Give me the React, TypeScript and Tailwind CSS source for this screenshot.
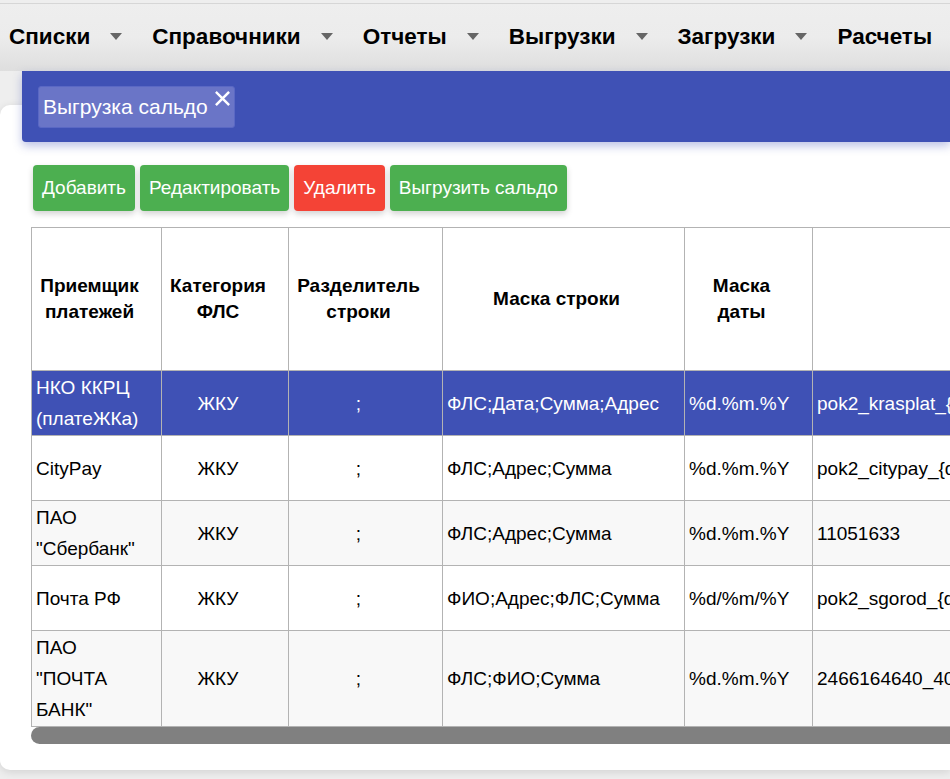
import React from "react";

const MENU = ["Списки", "Справочники", "Отчеты", "Выгрузки", "Загрузки", "Расчеты"];

const BUTTONS: { label: string; color: string }[] = [
  { label: "Добавить", color: "bg-[#4caf50]" },
  { label: "Редактировать", color: "bg-[#4caf50]" },
  { label: "Удалить", color: "bg-[#f44336]" },
  { label: "Выгрузить сальдо", color: "bg-[#4caf50]" },
];

type Row = { name: string[]; cat: string; sep: string; mask: string; date: string; file: string; h: string };

const ROWS: Row[] = [
  { name: ["НКО ККРЦ", "(платеЖКа)"], cat: "ЖКУ", sep: ";", mask: "ФЛС;Дата;Сумма;Адрес", date: "%d.%m.%Y", file: "pok2_krasplat_{date}.txt", h: "h-[65px]" },
  { name: ["CityPay"], cat: "ЖКУ", sep: ";", mask: "ФЛС;Адрес;Сумма", date: "%d.%m.%Y", file: "pok2_citypay_{date}.txt", h: "h-[65px]" },
  { name: ["ПАО", "\"Сбербанк\""], cat: "ЖКУ", sep: ";", mask: "ФЛС;Адрес;Сумма", date: "%d.%m.%Y", file: "11051633", h: "h-[65px]" },
  { name: ["Почта РФ"], cat: "ЖКУ", sep: ";", mask: "ФИО;Адрес;ФЛС;Сумма", date: "%d/%m/%Y", file: "pok2_sgorod_{date}.txt", h: "h-[65px]" },
  { name: ["ПАО", "\"ПОЧТА", "БАНК\""], cat: "ЖКУ", sep: ";", mask: "ФЛС;ФИО;Сумма", date: "%d.%m.%Y", file: "2466164640_40702810", h: "h-[96px]" },
];

export default function App() {
  return (
    <div className="min-h-[779px] w-[950px] overflow-hidden bg-[#eeeeee] font-['Liberation_Sans',Arial,sans-serif]">
      {/* top menu */}
      <div className="mt-[3px] flex h-[68px] items-center gap-[30px] border-t border-[#d6d6d6] bg-gradient-to-b from-[#eeeeee] via-[#ececec] to-[#dedede] pb-[2px] pl-[9px] whitespace-nowrap">
        {MENU.map((m, i) => (
          <div key={m} className="flex items-center gap-[20px]">
            <span className="text-[22.5px] font-bold text-black">{m}</span>
            {i < MENU.length - 1 && (
              <span className="h-0 w-0 border-x-[6px] border-t-[7px] border-x-transparent border-t-[#666666]" />
            )}
          </div>
        ))}
      </div>

      {/* tab strip */}
      <div className="relative z-10 ml-[22px] flex h-[71px] items-start rounded-bl-[4px] bg-[#3f51b5] pl-[16px] pt-[15px] shadow-[0_4px_10px_rgba(63,81,181,0.35)]">
        <div className="flex h-[42px] items-start rounded-[3px] border border-[#5a68c4] bg-[#6a75c7] pl-[4px] pr-[2px]">
          <span className="mt-[8px] text-[21px] leading-[24px] text-white">Выгрузка сальдо</span>
          <svg viewBox="0 0 20 20" className="mt-[2px] ml-[5px] h-[19px] w-[19px]" fill="none" stroke="white" strokeWidth="2.6" strokeLinecap="square">
            <path d="M4 4 L16 16 M16 4 L4 16" />
          </svg>
        </div>
      </div>

      {/* content card */}
      <div className="-mt-[37px] h-[665px] rounded-l-[10px] bg-white pl-[31px] pt-[60px] shadow-[0_2px_8px_rgba(0,0,0,0.12)]">
        <div className="flex gap-[5px] pl-[2px]">
          {BUTTONS.map((b) => (
            <button
              key={b.label}
              className={`${b.color} h-[46px] rounded-[4px] px-[9px] text-[19px] text-white shadow-[0_3px_6px_rgba(0,0,0,0.18)]`}
            >
              {b.label}
            </button>
          ))}
        </div>

        <div className="mt-[16px] overflow-hidden">
          <table className="w-[1100px] table-fixed border-collapse text-[19px]">
            <colgroup>
              <col className="w-[130px]" />
              <col className="w-[127px]" />
              <col className="w-[154px]" />
              <col className="w-[242px]" />
              <col className="w-[128px]" />
              <col className="w-[319px]" />
            </colgroup>
            <thead>
              <tr className="h-[143px] bg-white">
                {[
                  ["Приемщик", "платежей"],
                  ["Категория", "ФЛС"],
                  ["Разделитель", "строки"],
                  ["Маска строки"],
                  ["Маска", "даты"],
                  [""],
                ].map((h, i) => (
                  <th key={i} className="border border-[#b3b3b3] pl-[2px] pr-[16px] text-center text-[19px] leading-[26px] font-bold text-black">
                    {h.map((l, j) => (
                      <div key={j} className="whitespace-nowrap">{l}</div>
                    ))}
                  </th>
                ))}
              </tr>
            </thead>
            <tbody>
              {ROWS.map((r, i) => {
                const sel = i === 0;
                const bg = sel ? "bg-[#3f51b5] text-white" : i % 2 === 0 ? "bg-[#f8f8f8] text-black" : "bg-white text-black";
                return (
                  <tr key={i} className={`${r.h} ${bg} leading-[31px]`}>
                    <td className="border border-[#b3b3b3] px-[4px] whitespace-nowrap">
                      {r.name.map((l, j) => (
                        <div key={j}>{l}</div>
                      ))}
                    </td>
                    <td className="border border-[#b3b3b3] pl-[2px] pr-[16px] text-center">{r.cat}</td>
                    <td className="border border-[#b3b3b3] pl-[2px] pr-[16px] text-center">{r.sep}</td>
                    <td className="border border-[#b3b3b3] px-[4px] whitespace-nowrap">{r.mask}</td>
                    <td className="border border-[#b3b3b3] px-[4px] whitespace-nowrap">{r.date}</td>
                    <td className="border border-[#b3b3b3] px-[4px] whitespace-nowrap">{r.file}</td>
                  </tr>
                );
              })}
            </tbody>
          </table>
          <div className="h-[17px] w-[1100px] rounded-l-full bg-[#808080]" />
        </div>
      </div>
    </div>
  );
}
